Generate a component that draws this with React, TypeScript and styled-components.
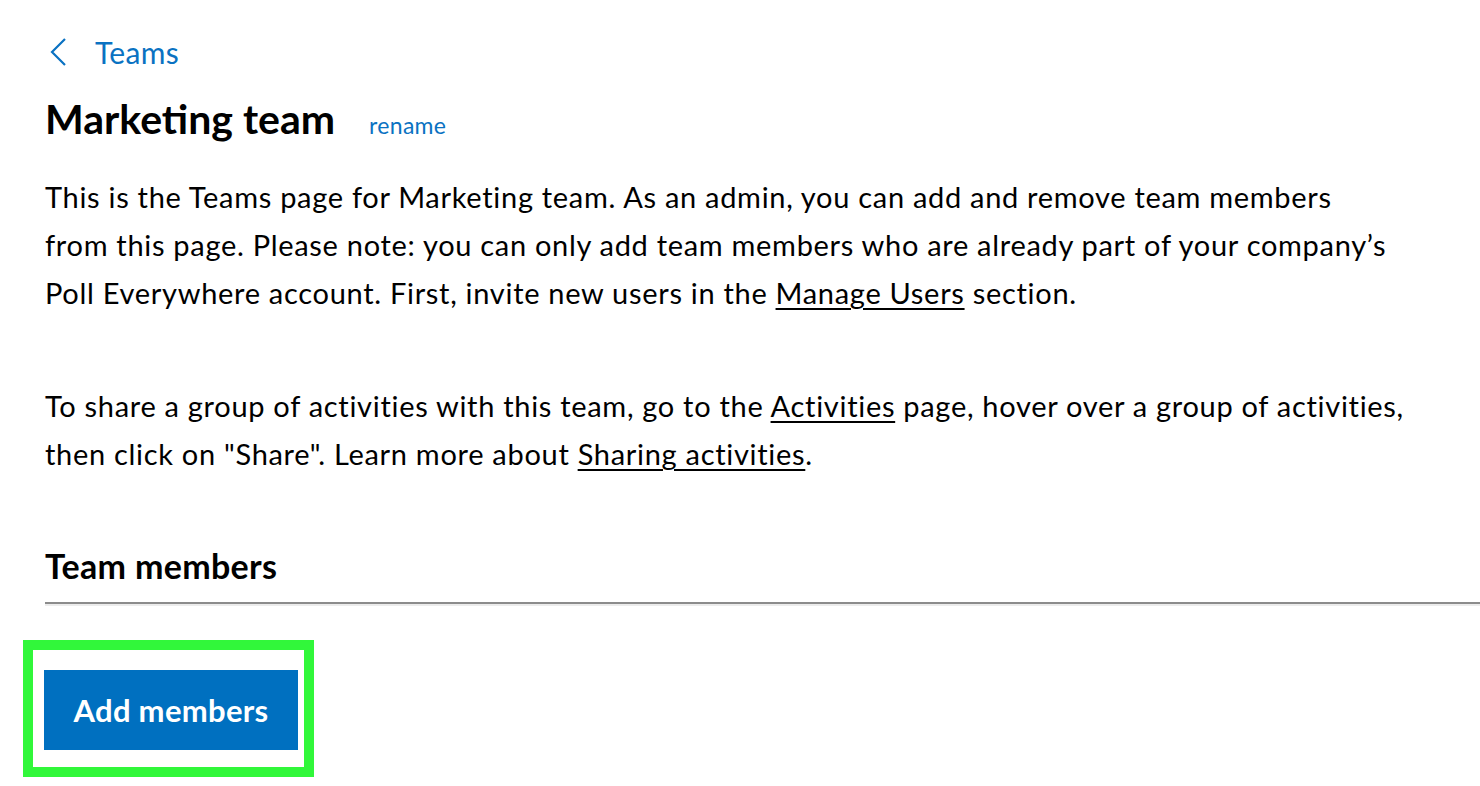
import React from "react";
import styled, { createGlobalStyle } from "styled-components";

const Global = createGlobalStyle`
  html, body { margin: 0; padding: 0; background: #fff; }
  body { font-family: Lato, "Open Sans", sans-serif; color: #000; }
  * { box-sizing: border-box; }
`;

const Page = styled.main`
  padding: 32px 0 0 45px;
  display: flex;
  flex-direction: column;
`;

const BackLink = styled.a`
  display: flex;
  align-items: center;
  gap: 28px;
  color: #0a72c2;
  text-decoration: none;
  font-size: 30px;
  letter-spacing: 0.3px;
  height: 40px;
  margin-left: 4px;
`;

const TitleRow = styled.div`
  display: flex;
  align-items: baseline;
  gap: 34px;
  margin-top: 22px;
`;

const Title = styled.h1`
  margin: 0;
  font-size: 41px;
  font-weight: 700;
  line-height: 1.2;
`;

const Rename = styled.a`
  color: #0a72c2;
  font-size: 23px;
  letter-spacing: 0.3px;
  text-decoration: none;
`;

const Para = styled.p<{ $gap?: number }>`
  margin: ${(p) => p.$gap ?? 0}px 0 0;
  font-size: 29px;
  letter-spacing: 0.7px;
  line-height: 48px;
  white-space: nowrap;
`;

const Underlined = styled.a`
  color: inherit;
  text-decoration: underline;
  text-underline-offset: 4px;
  text-decoration-thickness: 2px;
`;

const SectionTitle = styled.h2`
  margin: 68px 0 0;
  font-size: 34px;
  font-weight: 700;
  letter-spacing: 0.3px;
  line-height: 40px;
`;

const Rule = styled.hr`
  margin: 16px 0 0;
  border: none;
  height: 4px;
  border-top: 2px solid #8c8c8c;
  border-bottom: 2px solid #ececec;
`;

const Highlight = styled.div`
  margin: 34px 0 0 -22px;
  align-self: flex-start;
  border: 10px solid #31f73a;
  padding: 20px 6px 17px 11px;
`;

const PrimaryButton = styled.button`
  display: block;
  background: #0070c0;
  color: #fff;
  border: none;
  font-family: inherit;
  font-size: 31px;
  font-weight: 700;
  letter-spacing: 0.3px;
  width: 254px;
  height: 80px;
  cursor: pointer;
`;

const Chevron = () => (
  <svg width="18" height="30" viewBox="0 0 18 30" fill="none">
    <polyline points="16,2 3,15 16,28" stroke="#0a72c2" strokeWidth="2.2" />
  </svg>
);

export default function App() {
  return (
    <>
      <Global />
      <Page>
        <BackLink href="#">
          <Chevron />
          Teams
        </BackLink>
        <TitleRow>
          <Title>Marketing team</Title>
          <Rename href="#">rename</Rename>
        </TitleRow>
        <Para $gap={30}>
          This is the Teams page for Marketing team. As an admin, you can add and remove team members
          <br />
          from this page. Please note: you can only add team members who are already part of your
          company’s
          <br />
          Poll Everywhere account. First, invite new users in the{" "}
          <Underlined href="#">Manage Users</Underlined> section.
        </Para>
        <Para $gap={65}>
          To share a group of activities with this team, go to the{" "}
          <Underlined href="#">Activities</Underlined> page, hover over a group of activities,
          <br />
          then click on "Share". Learn more about <Underlined href="#">Sharing activities</Underlined>.
        </Para>
        <SectionTitle>Team members</SectionTitle>
        <Rule />
        <Highlight>
          <PrimaryButton>Add members</PrimaryButton>
        </Highlight>
      </Page>
    </>
  );
}
